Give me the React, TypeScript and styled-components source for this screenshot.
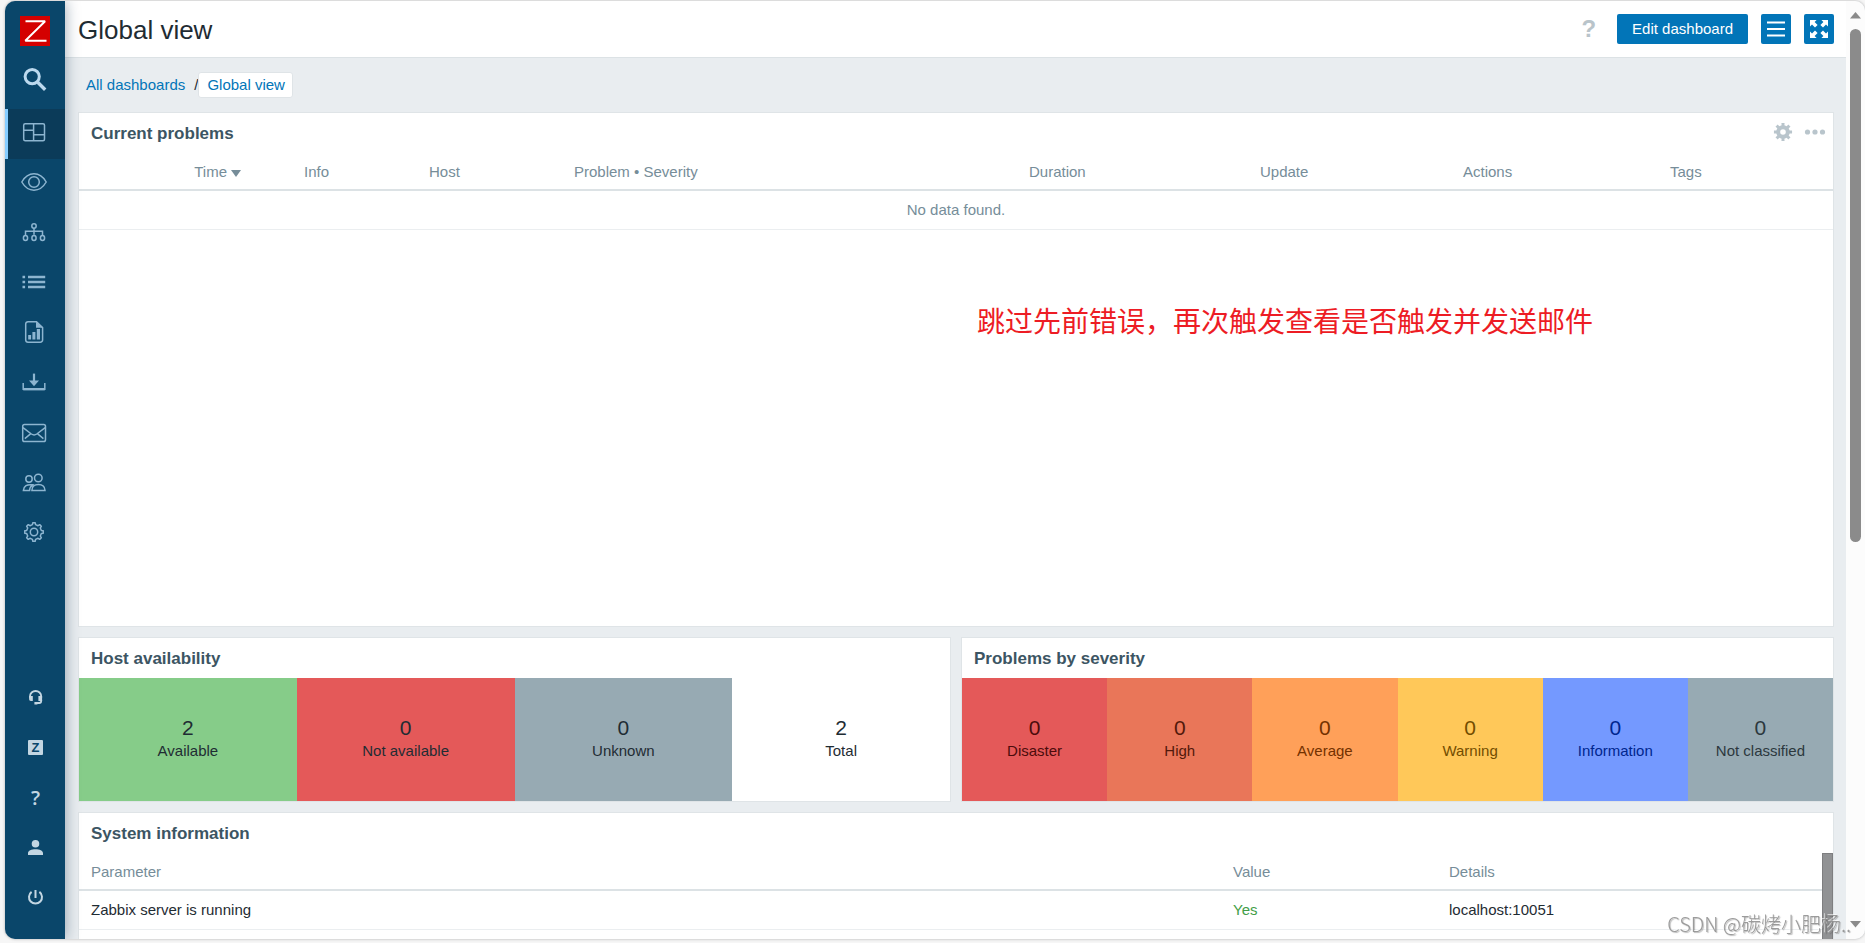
import React from 'react';
import styled, { createGlobalStyle } from 'styled-components';

const GlobalStyle = createGlobalStyle`
  * { box-sizing: border-box; }
  body {
    margin: 0;
    background: #f6f6f6;
    color: #1f2c33;
    font-family: "Liberation Sans", Arial, "Noto Sans CJK SC", sans-serif;
    font-size: 15px;
    line-height: 18px;
  }
  a { color: #0275b8; text-decoration: none; }
`;

/* ---------- shell ---------- */

const Frame = styled.div`
  height: 100vh;
  padding: 1px 0 4px 5px;
  overflow: hidden;
`;

const Shell = styled.div`
  display: flex;
  height: 100%;
  border-radius: 10px;
  overflow: hidden;
  background: #e9edf0;
  box-shadow: 0 0 3px rgba(0, 0, 0, 0.3);
`;

const Sidebar = styled.aside`
  display: flex;
  flex-direction: column;
  flex: 0 0 60px;
  z-index: 1;
  padding: 15px 0 17px;
  background: #0a466a;
  box-shadow: 0 0 14px rgba(10, 40, 70, 0.4);
`;

const Logo = styled.a`
  display: block;
  width: 30px;
  height: 30px;
  margin: 0 0 0 15px;
`;

const SearchButton = styled.button`
  display: grid;
  place-items: center;
  height: 63px;
  padding: 4px 0 0;
  border: 0;
  background: none;
  color: #bcd9ee;
`;

const Menu = styled.nav`
  display: flex;
  flex-direction: column;
  & + & { margin-top: auto; }
`;

const MenuItem = styled.a<{ $selected?: boolean; $tone: string }>`
  display: flex;
  align-items: center;
  height: 50px;
  padding-left: ${p => (p.$selected ? 13 : 16)}px;
  border-left: ${p => (p.$selected ? '3px solid #86cdff' : '0')};
  background: ${p => (p.$selected ? '#0b3b59' : 'transparent')};
  color: ${p => p.$tone};
`;

const Main = styled.main`
  display: flex;
  flex-direction: column;
  flex: 1;
  min-width: 0;
`;

const Header = styled.header`
  display: flex;
  align-items: center;
  height: 57px;
  flex: none;
  padding: 0 12px 0 13px;
  background: #fff;
  border-bottom: 1px solid #dce2e5;
`;

const Title = styled.h1`
  flex: 1;
  margin: 0;
  padding-top: 2px;
  font-size: 26px;
  line-height: 30px;
  font-weight: 400;
`;

const Actions = styled.div`
  display: flex;
  align-items: center;
  gap: 13px;
`;

const HelpLink = styled.a`
  margin-right: 8px;
  color: #b9c4ca;
  font-size: 24px;
  line-height: 30px;
  font-weight: 700;
`;

const PrimaryButton = styled.button<{ $icon?: boolean }>`
  display: grid;
  place-items: center;
  width: ${p => (p.$icon ? '30px' : 'auto')};
  height: 30px;
  padding: ${p => (p.$icon ? '0' : '0 15px')};
  border: 0;
  border-radius: 2px;
  background: #0275b8;
  color: #fff;
  font: inherit;
`;

const Breadcrumbs = styled.nav`
  display: flex;
  align-items: center;
  flex: none;
  height: 54px;
  padding-left: 21px;
`;

const Separator = styled.span`
  margin-left: 9px;
`;

const CurrentCrumb = styled.a`
  padding: 3px 7px 3px 8px;
  border: 1px solid #dfe4e7;
  border-radius: 3px;
  background: #fff;
`;

/* ---------- dashboard ---------- */

const Dashboard = styled.div`
  display: grid;
  flex: 1;
  min-height: 0;
  grid-template-columns: 1fr 1fr;
  grid-template-rows: 515px auto 1fr;
  gap: 10px;
  padding: 0 12px 0 13px;
`;

const Widget = styled.section<{ $wide?: boolean; $open?: boolean }>`
  position: relative;
  grid-column: ${p => (p.$wide ? '1 / -1' : 'auto')};
  min-width: 0;
  border: 1px solid #dfe4e7;
  border-bottom-width: ${p => (p.$open ? 0 : 1)}px;
  background: #fff;
`;

const WidgetHead = styled.div`
  display: flex;
  align-items: center;
  justify-content: space-between;
  height: 40px;
  padding: 0 7px 2px 12px;
`;

const WidgetTitle = styled.h4`
  margin: 0;
  padding-top: 3px;
  color: #3c5563;
  font-size: 17px;
  line-height: 20px;
`;

const WidgetTools = styled.div`
  display: flex;
  gap: 11px;
`;

const ToolButton = styled.button`
  display: grid;
  place-items: center;
  padding: 0;
  border: 0;
  background: none;
  color: #b9c5cc;
`;

const Table = styled.table`
  width: 100%;
  table-layout: fixed;
  border-collapse: separate;
  border-spacing: 0;
`;

const Col = styled.col<{ $w?: number }>`
  width: ${p => (p.$w ? `${p.$w}px` : 'auto')};
`;

const Th = styled.th<{ $right?: boolean; $first?: boolean }>`
  height: 38px;
  padding: 2px 6px 0 ${p => (p.$first ? 12 : 6)}px;
  border-bottom: 2px solid #dce2e5;
  color: #768d99;
  font-weight: 400;
  text-align: ${p => (p.$right ? 'right' : 'left')};
  white-space: nowrap;
`;

const SortLink = styled.a`
  color: inherit;
`;

const SortArrow = styled.svg`
  margin-left: 4px;
`;

const Td = styled.td<{ $tone?: string; $center?: boolean; $first?: boolean }>`
  height: 39px;
  padding: 0 6px 0 ${p => (p.$first ? 12 : 6)}px;
  border-bottom: 1px solid #ebeef0;
  color: ${p => p.$tone ?? 'inherit'};
  text-align: ${p => (p.$center ? 'center' : 'left')};
`;

const Annotation = styled.p`
  position: absolute;
  top: 187px;
  left: calc(50% + 21px);
  margin: 0;
  color: #ed1c24;
  font: 28px/40px "Noto Sans CJK SC", sans-serif;
  white-space: nowrap;
`;

const Tiles = styled.div`
  display: grid;
  grid-auto-flow: column;
  grid-auto-columns: 1fr;
  height: 123px;
`;

const Tile = styled.div<{ $bg: string; $fg: string }>`
  display: flex;
  flex-direction: column;
  align-items: center;
  justify-content: center;
  padding-bottom: 4px;
  background: ${p => p.$bg};
  color: ${p => p.$fg};
`;

const Count = styled.span`
  font-size: 21px;
  line-height: 26px;
`;

const TileLabel = styled.span`
  line-height: 20px;
`;

const ScrollArea = styled.div`
  display: flex;
`;

const ScrollContent = styled.div`
  flex: 1;
  min-width: 0;
`;

const InnerThumb = styled.div`
  flex: 0 0 11px;
  height: 100vh;
  border: 1px solid #7e7e80;
  background: #919294;
`;

const PageScroll = styled.div`
  display: flex;
  flex-direction: column;
  align-items: center;
  flex: 0 0 19px;
  padding: 11px 0;
  background: #fcfcfc;
`;

const PageThumb = styled.div`
  width: 11px;
  height: 56%;
  margin: 10px 0 auto;
  border-radius: 6px;
  background: #8b8b8b;
`;

const Watermark = styled.div`
  position: fixed;
  right: 14px;
  bottom: 4px;
  color: rgba(145, 145, 145, 0.9);
  font: 300 20px/30px "Noto Sans CJK SC", sans-serif;
  text-shadow: -1px -1px 0 rgba(255, 255, 255, 0.6), 1px 1px 1px rgba(80, 80, 80, 0.4);
  white-space: nowrap;
  pointer-events: none;
  z-index: 2;
`;

/* ---------- icons ---------- */

const cog = (cx: number, cy: number, outer: number, inner: number, teeth: number, wide = 0.27, tip = 0.16) => {
  const pts: string[] = [];
  const step = (Math.PI * 2) / teeth;
  for (let i = 0; i < teeth; i++) {
    const a = i * step - Math.PI / 2;
    const add = (r: number, t: number) =>
      pts.push(`${(cx + r * Math.cos(a + t * step)).toFixed(2)} ${(cy + r * Math.sin(a + t * step)).toFixed(2)}`);
    add(inner, -wide);
    add(outer, -tip);
    add(outer, tip);
    add(inner, wide);
  }
  return `M${pts.join('L')}Z`;
};

const Icon = ({ children, size = 28 }: { children: React.ReactNode; size?: number }) => (
  <svg width={size} height={size} viewBox={`0 0 ${size} ${size}`} fill="none" stroke="currentColor" strokeWidth="1.5" aria-hidden="true">
    {children}
  </svg>
);

const mainMenu: { label: string; icon: React.ReactNode }[] = [
  {
    label: 'Dashboards',
    icon: (
      <>
        <rect x="2.7" y="3.7" width="20.8" height="17" rx="1.5" />
        <path d="M12.6 3.5v17M2.5 10.3h10.1M12.6 14.8h10.9" />
      </>
    ),
  },
  {
    label: 'Monitoring',
    icon: (
      <>
        <path d="M.8 12C4 6.4 8 3.8 13 3.8S22 6.400 25.200 12C22 17.600 18 20.200 13 20.200S4 17.600 .8 12Z" />
        <circle cx="13" cy="12" r="5.3" />
      </>
    ),
  },
  {
    label: 'Services',
    icon: (
      <>
        <circle cx="13" cy="6" r="2.2" />
        <path d="M13 8.3v6.5M4.5 15v-3.8h17V15" />
        <ellipse cx="4.5" cy="17.9" rx="2.1" ry="2.5" />
        <ellipse cx="13" cy="17.9" rx="2.1" ry="2.5" />
        <ellipse cx="21.5" cy="17.9" rx="2.1" ry="2.5" />
      </>
    ),
  },
  {
    label: 'Inventory',
    icon: <path strokeWidth="2.5" d="M1.5 7h2.6M7 7h17.2M1.5 12h2.6M7 12h17.2M1.5 17h2.6M7 17h17.2" />,
  },
  {
    label: 'Reports',
    icon: (
      <>
        <path d="M15.5 1.7H7a2.3 2.3 0 0 0-2.3 2.3v16A2.3 2.3 0 0 0 7 22.2h12.3a2.3 2.3 0 0 0 2.3-2.3V7.6Z" />
        <path fill="currentColor" stroke="none" d="M15 1.4v6.3h6.4ZM7.2 15h2.9v4.4H7.2ZM11.4 12h3v7.4h-3ZM15.8 9h3.2v10.4h-3.2Z" />
      </>
    ),
  },
  {
    label: 'Data collection',
    icon: (
      <>
        <path strokeWidth="2.2" d="M13 3.6V12" />
        <path fill="currentColor" stroke="none" d="M8 10.6h10L13 16.2Z" />
        <path d="M2.2 13v6.3h21.6V13" />
        <path strokeWidth="2.4" d="M2.2 19.2h21.6" />
      </>
    ),
  },
  {
    label: 'Alerts',
    icon: (
      <>
        <rect x="1.7" y="4.6" width="22.8" height="17" rx="1.8" />
        <path d="M2 7.6l8.4 6.4q2.7 1.8 5.4 0L24.2 7.6M3.8 18.6l6-4.9M22.4 18.6l-6-4.9" />
      </>
    ),
  },
  {
    label: 'Users',
    icon: (
      <>
        <circle cx="17.3" cy="8" r="3.8" />
        <circle cx="8" cy="9" r="3.2" />
        <path d="M10.9 20.4C11 16.6 13.4 14.6 17.4 14.6s6.4 2 6.6 5.8ZM11.6 14.8Q3 13.8 2.4 20.4h6.2Q8.6 17 11.6 14.8Z" />
      </>
    ),
  },
  {
    label: 'Administration',
    icon: (
      <>
        <path strokeLinejoin="round" d={cog(13, 12, 9.3, 7.5, 8)} />
        <circle cx="13" cy="12" r="3.7" />
      </>
    ),
  },
];

const footMenu: { label: string; icon: React.ReactNode }[] = [
  {
    label: 'Support',
    icon: (
      <>
        <path strokeWidth="1.8" d="M9 15v-1.800a5.600 5.200 0 0 1 11.200 0V15M20.200 17v1a2 2 0 0 1-2 2h-3.600" />
        <path fill="currentColor" stroke="none" d="M8.1 13h3.7v5H9.9a1.8 1.8 0 0 1-1.8-1.8ZM21.1 13h-3.7v5h3.7ZM13.4 19h3v2.6h-3Z" />
      </>
    ),
  },
  {
    label: 'Integrations',
    icon: (
      <>
        <rect x="7" y="7" width="15" height="15" rx="1" fill="currentColor" stroke="none" />
        <text x="14.5" y="19" textAnchor="middle" fontSize="13" fontWeight="700" fill="#0a466a" stroke="none">Z</text>
      </>
    ),
  },
  {
    label: 'Help',
    icon: (
      <text x="14.5" y="22" textAnchor="middle" fontFamily="Open Sans" fontSize="20" fontWeight="600" fill="currentColor" stroke="none">?</text>
    ),
  },
  {
    label: 'User settings',
    icon: (
      <path fill="currentColor" stroke="none" d="M14.5 7a3.8 3.8 0 1 1 0 7.6a3.8 3.8 0 0 1 0-7.6ZM7 22v-1.8c0-2.4 3.4-3.9 7.5-3.9s7.5 1.5 7.5 3.9V22Z" />
    ),
  },
  {
    label: 'Sign out',
    icon: <path strokeWidth="2" d="M14.5 7v8M10.6 8.900a6.500 6.500 0 1 0 7.800 0" />,
  },
];

/* ---------- data ---------- */

const availability = [
  { n: 2, label: 'Available', bg: '#86cc89', fg: '#1f2c33' },
  { n: 0, label: 'Not available', bg: '#e45959', fg: '#1f2c33' },
  { n: 0, label: 'Unknown', bg: '#97aab3', fg: '#1f2c33' },
  { n: 2, label: 'Total', bg: '#ffffff', fg: '#1f2c33' },
];

const severities = [
  { n: 0, label: 'Disaster', bg: '#e45959', fg: '#4b0c0c' },
  { n: 0, label: 'High', bg: '#e97659', fg: '#52190b' },
  { n: 0, label: 'Average', bg: '#ffa059', fg: '#733100' },
  { n: 0, label: 'Warning', bg: '#ffc859', fg: '#734d00' },
  { n: 0, label: 'Information', bg: '#7499ff', fg: '#00268e' },
  { n: 0, label: 'Not classified', bg: '#97aab3', fg: '#2c383e' },
];

const TileRow = ({ items }: { items: typeof availability }) => (
  <Tiles>
    {items.map(t => (
      <Tile key={t.label} $bg={t.bg} $fg={t.fg}>
        <Count>{t.n}</Count>
        <TileLabel>{t.label}</TileLabel>
      </Tile>
    ))}
  </Tiles>
);

export default function App() {
  return (
    <Frame>
      <GlobalStyle />
      <Shell>
        <Sidebar>
          <Logo href="#" aria-label="Zabbix">
            <svg width="30" height="30" viewBox="0 0 30 30" fill="none" aria-hidden="true">
              <rect width="30" height="30" fill="#d40000" />
              <path d="M5.5 5.200h19.600L5.300 24.800h21.200" stroke="#fff" strokeWidth="1.9" strokeLinejoin="bevel" />
            </svg>
          </Logo>
          <SearchButton aria-label="Search">
            <Icon size={24}>
              <circle cx="9.2" cy="8.6" r="7.1" strokeWidth="3" />
              <path d="M14.2 13.8l8 8" strokeWidth="3.4" />
            </Icon>
          </SearchButton>
          <Menu aria-label="Main">
            {mainMenu.map((m, i) => (
              <MenuItem key={m.label} href="#" aria-label={m.label} $selected={i === 0} $tone="#8db5d0">
                <Icon>{m.icon}</Icon>
              </MenuItem>
            ))}
          </Menu>
          <Menu aria-label="User">
            {footMenu.map(m => (
              <MenuItem key={m.label} href="#" aria-label={m.label} $tone="#c3d6e2">
                <Icon>{m.icon}</Icon>
              </MenuItem>
            ))}
          </Menu>
        </Sidebar>

        <Main>
          <Header>
            <Title>Global view</Title>
            <Actions>
              <HelpLink href="#">?</HelpLink>
              <PrimaryButton>Edit dashboard</PrimaryButton>
              <PrimaryButton $icon aria-label="Actions">
                <Icon size={18}>
                  <path d="M0 2.500h18M0 9h18M0 15.500h18" strokeWidth="2" />
                </Icon>
              </PrimaryButton>
              <PrimaryButton $icon aria-label="Kiosk mode">
                <Icon size={18}>
                  <path
                    fill="currentColor"
                    stroke="none"
                    d="M0 0h6.6L4.6 2l3 3L5 7.6l-3-3-2 2ZM18 0v6.6l-2-2-3 3L10.4 5l3-3-2-2ZM0 18v-6.6l2 2 3-3L7.6 13l-3 3 2 2ZM18 18h-6.6l2-2-3-3 2.6-2.6 3 3 2-2Z"
                  />
                </Icon>
              </PrimaryButton>
            </Actions>
          </Header>

          <Breadcrumbs aria-label="Breadcrumb">
            <a href="#">All dashboards</a>
            <Separator>/</Separator>
            <CurrentCrumb href="#">Global view</CurrentCrumb>
          </Breadcrumbs>

          <Dashboard>
            <Widget $wide>
              <WidgetHead>
                <WidgetTitle>Current problems</WidgetTitle>
                <WidgetTools>
                  <ToolButton aria-label="Edit widget">
                    <Icon size={20}>
                      <path
                        fill="currentColor"
                        stroke="none"
                        fillRule="evenodd"
                        d={`${cog(10, 10, 9.2, 6.8, 8, 0.26, 0.22)}M10 7.2a2.8 2.8 0 1 0 0 5.6a2.8 2.8 0 1 0 0-5.6Z`}
                      />
                    </Icon>
                  </ToolButton>
                  <ToolButton aria-label="Widget actions">
                    <svg width="22" height="20" viewBox="0 0 22 20" fill="currentColor" aria-hidden="true">
                      <circle cx="3.5" cy="10" r="2.6" />
                      <circle cx="11" cy="10" r="2.6" />
                      <circle cx="18.5" cy="10" r="2.6" />
                    </svg>
                  </ToolButton>
                </WidgetTools>
              </WidgetHead>
              <Table>
                <colgroup>
                  <Col $w={168} />
                  <Col $w={51} />
                  <Col $w={125} />
                  <Col $w={145} />
                  <Col />
                  <Col $w={231} />
                  <Col $w={203} />
                  <Col $w={207} />
                  <Col $w={169} />
                </colgroup>
                <thead>
                  <tr>
                    <Th $right>
                      <SortLink href="#">
                        Time
                        <SortArrow width="10" height="7" viewBox="0 0 10 7" aria-hidden="true">
                          <path d="M0 0h10L5 7Z" fill="#768d99" />
                        </SortArrow>
                      </SortLink>
                    </Th>
                    <Th />
                    <Th>Info</Th>
                    <Th>Host</Th>
                    <Th>Problem • Severity</Th>
                    <Th>Duration</Th>
                    <Th>Update</Th>
                    <Th>Actions</Th>
                    <Th>Tags</Th>
                  </tr>
                </thead>
                <tbody>
                  <tr>
                    <Td colSpan={9} $center $tone="#768d99">No data found.</Td>
                  </tr>
                </tbody>
              </Table>
              <Annotation>跳过先前错误，再次触发查看是否触发并发送邮件</Annotation>
            </Widget>

            <Widget>
              <WidgetHead>
                <WidgetTitle>Host availability</WidgetTitle>
              </WidgetHead>
              <TileRow items={availability} />
            </Widget>

            <Widget>
              <WidgetHead>
                <WidgetTitle>Problems by severity</WidgetTitle>
              </WidgetHead>
              <TileRow items={severities} />
            </Widget>

            <Widget $wide $open>
              <WidgetHead>
                <WidgetTitle>System information</WidgetTitle>
              </WidgetHead>
              <ScrollArea>
                <ScrollContent>
                  <Table>
                    <colgroup>
                      <Col />
                      <Col $w={216} />
                      <Col $w={379} />
                    </colgroup>
                    <thead>
                      <tr>
                        <Th $first>Parameter</Th>
                        <Th>Value</Th>
                        <Th>Details</Th>
                      </tr>
                    </thead>
                    <tbody>
                      <tr>
                        <Td $first>Zabbix server is running</Td>
                        <Td $tone="#429e47">Yes</Td>
                        <Td>localhost:10051</Td>
                      </tr>
                    </tbody>
                  </Table>
                </ScrollContent>
                <InnerThumb />
              </ScrollArea>
            </Widget>
          </Dashboard>
        </Main>

        <PageScroll aria-hidden="true">
          <svg width="11" height="7" viewBox="0 0 11 7"><path d="M0 6.5 5.5 0 11 6.5Z" fill="#8b8b8b" /></svg>
          <PageThumb />
          <svg width="11" height="7" viewBox="0 0 11 7"><path d="M0 0h11L5.5 6.5Z" fill="#8b8b8b" /></svg>
        </PageScroll>
      </Shell>
      <Watermark>CSDN @碳烤小肥杨..</Watermark>
    </Frame>
  );
}
